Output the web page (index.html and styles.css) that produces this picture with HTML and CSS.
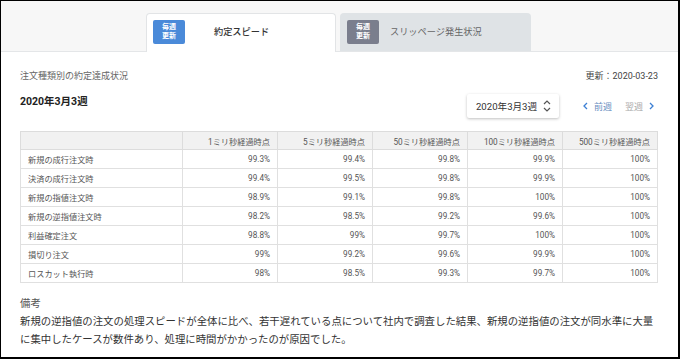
FILE: index.html
```html
<!DOCTYPE html>
<html lang="ja">
<head>
<meta charset="utf-8">
<link rel="stylesheet" href="styles.css">
</head>
<body>
<div class="frame">
  <div class="tabbar">
    <div class="tab tab-active">
      <span class="badge badge-blue">毎週<br>更新</span>
      <span class="tab-label">約定スピード</span>
    </div>
    <div class="tab tab-inactive">
      <span class="badge badge-gray">毎週<br>更新</span>
      <span class="tab-label">スリッページ発生状況</span>
    </div>
  </div>
  <div class="content">
    <div class="row-top">
      <span class="subtitle">注文種類別の約定達成状況</span>
      <span class="updated">更新：2020-03-23</span>
    </div>
    <div class="row-week">
      <span class="week">2020年3月3週</span>
      <div class="controls">
        <div class="select">
          <span>2020年3月3週</span>
          <svg class="updown" width="8" height="14" viewBox="0 0 8 14"><path d="M1 5 L4 2 L7 5 M1 9 L4 12 L7 9" fill="none" stroke="#555" stroke-width="1.2"/></svg>
        </div>
        <div class="pager">
          <span class="pg prev"><svg width="5" height="8" viewBox="0 0 5 8"><path d="M4 1 L1 4 L4 7" fill="none" stroke="#3c7fd4" stroke-width="1.3"/></svg>前週</span>
          <span class="pg next">翌週<svg width="5" height="8" viewBox="0 0 5 8"><path d="M1 1 L4 4 L1 7" fill="none" stroke="#3c7fd4" stroke-width="1.3"/></svg></span>
        </div>
      </div>
    </div>
    <table class="speed">
      <colgroup><col class="c0"><col><col><col><col><col></colgroup>
      <thead>
        <tr><th></th><th>1ミリ秒経過時点</th><th>5ミリ秒経過時点</th><th>50ミリ秒経過時点</th><th>100ミリ秒経過時点</th><th>500ミリ秒経過時点</th></tr>
      </thead>
      <tbody>
        <tr><td>新規の成行注文時</td><td>99.3%</td><td>99.4%</td><td>99.8%</td><td>99.9%</td><td>100%</td></tr>
        <tr><td>決済の成行注文時</td><td>99.4%</td><td>99.5%</td><td>99.8%</td><td>99.9%</td><td>100%</td></tr>
        <tr><td>新規の指値注文時</td><td>98.9%</td><td>99.1%</td><td>99.8%</td><td>100%</td><td>100%</td></tr>
        <tr><td>新規の逆指値注文時</td><td>98.2%</td><td>98.5%</td><td>99.2%</td><td>99.6%</td><td>100%</td></tr>
        <tr><td>利益確定注文</td><td>98.8%</td><td>99%</td><td>99.7%</td><td>100%</td><td>100%</td></tr>
        <tr><td>損切り注文</td><td>99%</td><td>99.2%</td><td>99.6%</td><td>99.9%</td><td>100%</td></tr>
        <tr><td>ロスカット執行時</td><td>98%</td><td>98.5%</td><td>99.3%</td><td>99.7%</td><td>100%</td></tr>
      </tbody>
    </table>
    <div class="note">
      <div class="note-title">備考</div>
      <p class="note-body">新規の逆指値の注文の処理スピードが全体に比べ、若干遅れている点について社内で調査した結果、新規の逆指値の注文が同水準に大量に集中したケースが数件あり、処理に時間がかかったのが原因でした。</p>
    </div>
  </div>
</div>
</body>
</html>
```

FILE: styles.css
```css
* { box-sizing: border-box; }
html, body { margin: 0; padding: 0; background: #fff; }
body {
  font-family: Roboto, "Noto Sans CJK JP", sans-serif;
  color: #333;
}
.frame {
  width: 680px;
  height: 359px;
  border-style: solid;
  border-color: #000;
  border-width: 1px 2px 2px 1px;
  overflow: hidden;
  background: #fff;
}
.tabbar {
  height: 51px;
  background: #f7f7f7;
  border-bottom: 1px solid #e4e6e8;
  display: flex;
  align-items: flex-end;
  gap: 4px;
  padding: 12px 0 0 145px;
}
.tab {
  width: 190px;
  height: 39px;
  margin-bottom: -1px;
  border-radius: 4px 4px 0 0;
  display: flex;
  align-items: flex-start;
  padding: 7px 0 0 7px;
}
.tab-active {
  background: #fff;
  border: 1px solid #e2e4e6;
  border-bottom: none;
  padding-left: 6px;
  padding-top: 6px;
}
.tab-inactive {
  background: #dfe3e6;
  width: 191px;
  height: 38px;
  margin-bottom: 0;
}
.badge {
  width: 32px;
  height: 24px;
  border-radius: 2px;
  color: #fff;
  font-size: 7px;
  line-height: 9px;
  font-weight: 700;
  display: flex;
  align-items: center;
  justify-content: center;
  text-align: center;
  flex: none;
}
.badge-blue { background: #4a8ad9; }
.badge-gray { background: #7a7e8d; }
.tab-label {
  font-size: 9.2px;
  line-height: 24px;
}
.tab-active .tab-label {
  color: #333;
  font-weight: 500;
  margin-left: 29px;
}
.tab-inactive .tab-label {
  color: #666;
  margin-left: 11px;
}
.content {
  padding: 17px 20px 0 19px;
}
.row-top {
  display: flex;
  justify-content: space-between;
  font-size: 9px;
  line-height: 14px;
  color: #666;
}
.updated { color: #444; }
.row-week {
  display: flex;
  justify-content: space-between;
  align-items: flex-start;
  margin-top: 8px;
}
.week {
  font-size: 10.5px;
  font-weight: 700;
  line-height: 16px;
  color: #222;
  margin-top: 3px;
}
.controls {
  display: flex;
  align-items: center;
  margin-top: 3px;
}
.select {
  width: 92px;
  height: 24px;
  background: #fff;
  border-radius: 2px;
  box-shadow: 0 1px 3px rgba(0,0,0,0.25);
  display: flex;
  align-items: center;
  justify-content: space-between;
  padding: 0 8px 0 9px;
  font-size: 9.6px;
  color: #333;
}
.updown { display: block; }
.pager {
  display: flex;
  align-items: center;
  margin-left: 24px;
  padding-right: 4px;
  font-size: 9px;
  gap: 13px;
}
.pg { display: flex; align-items: center; gap: 6px; }
.prev { color: #6a8fbf; }
.next { color: #aaa; }
.pg svg { display: block; }
.speed {
  margin-top: 13px;
  width: 638px;
  border-collapse: collapse;
  table-layout: fixed;
  font-size: 8.2px;
  color: #555;
}
.speed col.c0 { width: 162px; }
.speed th, .speed td {
  border: 1px solid #e0e0e0;
  text-align: right;
  padding: 0 7px 0 7px;
  white-space: nowrap;
  font-weight: 400;
}
.speed th {
  height: 18px;
  background: #f1f1f1;
  color: #555;
  border-color: #dcdcdc;
}
.speed td { height: 19px; }
.speed td:first-child { text-align: left; }
.note {
  margin-top: 12px;
  font-size: 10.4px;
  line-height: 18px;
}
.note-title { color: #555; }
.note-body {
  margin: 0;
  width: 638px;
  color: #333;
}
```
